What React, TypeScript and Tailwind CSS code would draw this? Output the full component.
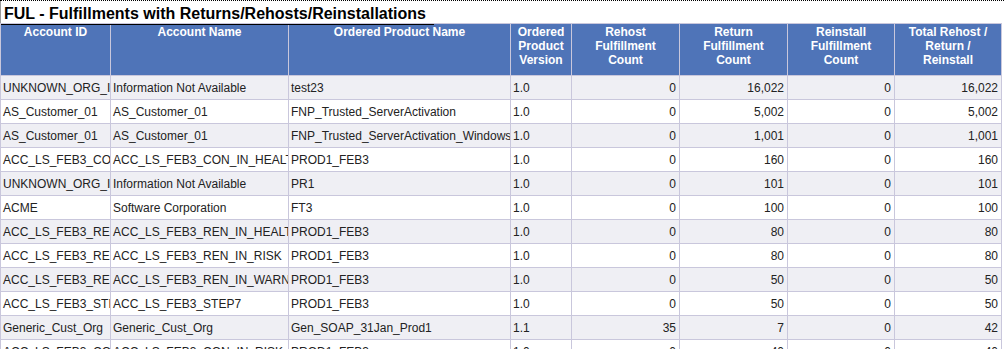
import React from 'react';

type Row = [string, string, string, string, string, string, string, string];

const rows: Row[] = [
  ['UNKNOWN_ORG_ID', 'Information Not Available', 'test23', '1.0', '0', '16,022', '0', '16,022'],
  ['AS_Customer_01', 'AS_Customer_01', 'FNP_Trusted_ServerActivation', '1.0', '0', '5,002', '0', '5,002'],
  ['AS_Customer_01', 'AS_Customer_01', 'FNP_Trusted_ServerActivation_Windows', '1.0', '0', '1,001', '0', '1,001'],
  ['ACC_LS_FEB3_CON_IN_HEALTH', 'ACC_LS_FEB3_CON_IN_HEALTH', 'PROD1_FEB3', '1.0', '0', '160', '0', '160'],
  ['UNKNOWN_ORG_ID', 'Information Not Available', 'PR1', '1.0', '0', '101', '0', '101'],
  ['ACME', 'Software Corporation', 'FT3', '1.0', '0', '100', '0', '100'],
  ['ACC_LS_FEB3_REN_IN_HEALTH', 'ACC_LS_FEB3_REN_IN_HEALTH', 'PROD1_FEB3', '1.0', '0', '80', '0', '80'],
  ['ACC_LS_FEB3_REN_IN_RISK', 'ACC_LS_FEB3_REN_IN_RISK', 'PROD1_FEB3', '1.0', '0', '80', '0', '80'],
  ['ACC_LS_FEB3_REN_IN_WARNING', 'ACC_LS_FEB3_REN_IN_WARNING', 'PROD1_FEB3', '1.0', '0', '50', '0', '50'],
  ['ACC_LS_FEB3_STEP7', 'ACC_LS_FEB3_STEP7', 'PROD1_FEB3', '1.0', '0', '50', '0', '50'],
  ['Generic_Cust_Org', 'Generic_Cust_Org', 'Gen_SOAP_31Jan_Prod1', '1.1', '35', '7', '0', '42'],
  ['ACC_LS_FEB3_CON_IN_RISK', 'ACC_LS_FEB3_CON_IN_RISK', 'PROD1_FEB3', '1.0', '0', '40', '0', '40'],
];

const headers = [
  ['Account ID'],
  ['Account Name'],
  ['Ordered Product Name'],
  ['Ordered', 'Product', 'Version'],
  ['Rehost', 'Fulfillment', 'Count'],
  ['Return', 'Fulfillment', 'Count'],
  ['Reinstall', 'Fulfillment', 'Count'],
  ['Total Rehost /', 'Return /', 'Reinstall'],
];

const widths = ['w-[110px]', 'w-[178px]', 'w-[222px]', 'w-[61px]', 'w-[108px]', 'w-[108px]', 'w-[107px]', 'w-[107px]'];

export default function App() {
  return (
    <div className="w-[1004px] h-[349px] overflow-hidden bg-white font-['Liberation_Sans',Arial,sans-serif] border-t border-dotted border-black">
      <div className="border-l border-[#9a9a9a] h-full">
        <div className="h-[22px] pt-[1px]">
          <span className="inline-block pl-[3px] pr-[8px] border-b border-black text-[16px] leading-[20px] font-bold text-black">
            FUL - Fulfillments with Returns/Rehosts/Reinstallations
          </span>
        </div>
        <table className="table-fixed border-collapse w-[1001px] -ml-px">
          <colgroup>
            {widths.map((w, i) => (
              <col key={i} className={w} />
            ))}
          </colgroup>
          <thead>
            <tr className="h-[52px]">
              {headers.map((h, i) => (
                <th
                  key={i}
                  className="bg-[#4f74b8] border border-[#c9c7dc] align-top text-center text-white text-[12px] leading-[14px] font-bold pt-[1px] px-[2px]"
                >
                  {h.map((l, j) => (
                    <div key={j}>{l}</div>
                  ))}
                </th>
              ))}
            </tr>
          </thead>
          <tbody>
            {rows.map((r, i) => (
              <tr key={i} className={`h-[24px] ${i % 2 === 0 ? 'bg-[#efeff4]' : 'bg-white'}`}>
                {r.map((c, j) => (
                  <td
                    key={j}
                    className={`border border-[#c9c7dc] text-[12px] leading-[14px] text-[#222] whitespace-nowrap overflow-hidden px-[2px] ${
                      j >= 4 ? 'text-right pr-[3px]' : 'text-left'
                    }`}
                  >
                    {c}
                  </td>
                ))}
              </tr>
            ))}
          </tbody>
        </table>
      </div>
    </div>
  );
}
